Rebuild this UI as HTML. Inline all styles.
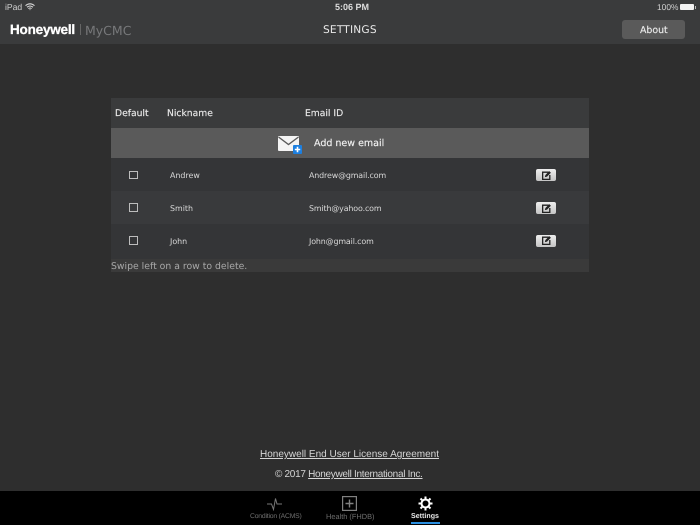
<!DOCTYPE html>
<html><head><meta charset="utf-8"><style>
html,body{margin:0;padding:0}
body{width:700px;height:525px;position:relative;overflow:hidden;background:#2e2e2e;font-family:"DejaVu Sans","Liberation Sans",sans-serif;text-rendering:geometricPrecision}
.a{position:absolute;white-space:nowrap}
.b{position:absolute}
.ls{font-family:"Liberation Sans",sans-serif}
.btn{position:absolute;left:536px;width:20px;height:12px;border-radius:2px;background:linear-gradient(#eee,#c4c4c4)}
.btn svg{position:absolute;left:5px;top:.5px}
.cb{position:absolute;left:129.2px;width:6.6px;height:6.6px;border:1.2px solid #bdbdbd}
.n{font-size:7.9px;color:#d8d8d8}
.e{letter-spacing:-.12px}
.h{font-size:9.2px;color:#e8e8e8;-webkit-text-stroke:.15px #e8e8e8}
</style></head><body>
<div class="b" style="left:0;top:0;width:700px;height:44px;background:#3a3b3c"></div>
<div class="a ls" style="left:5px;top:2px;font-size:8.6px;line-height:11px;color:#cfcfcf">iPad</div>
<svg class="b" style="left:25px;top:3px" width="10" height="8" viewBox="0 0 10 8"><path d="M0.5 2.6Q5 -1 9.5 2.6M2 4.2Q5 1.8 8 4.2M3.4 5.6Q5 4.5 6.6 5.6" fill="none" stroke="#ddd" stroke-width="1"/><path d="M4.2 6.4L5 7.4L5.8 6.4Z" fill="#ddd"/></svg>
<div class="a ls" style="left:335px;top:2px;font-size:9px;line-height:11px;color:#ddd;font-weight:bold">5:06 PM</div>
<div class="a ls" style="left:657px;top:2px;font-size:8.4px;line-height:11px;color:#cfcfcf">100%</div>
<div class="b" style="left:680px;top:4px;width:14px;height:6px;background:#f2f2f2;border-radius:1px"></div>
<div class="b" style="left:695px;top:6px;width:1px;height:3px;background:#bbb"></div>
<div class="a ls" style="left:10px;top:22px;font-size:13.5px;line-height:16px;font-weight:bold;color:#fff;letter-spacing:-0.2px;-webkit-text-stroke:0.3px #fff">Honeywell</div>
<div class="b" style="left:80px;top:24px;width:1px;height:11px;background:#666"></div>
<div class="a" style="left:85px;top:23px;font-size:12.5px;line-height:16px;color:#77787a">MyCMC</div>
<div class="a" style="left:323px;top:23px;font-size:10.6px;line-height:14px;color:#e8e8e8;letter-spacing:.2px">SETTINGS</div>
<div class="b" style="left:622px;top:20px;width:63px;height:19px;background:#5a5a5a;border-radius:3px"></div>
<div class="a" style="left:640px;top:24.5px;font-size:9.4px;line-height:12px;color:#e8e8e8;-webkit-text-stroke:.15px #e8e8e8">About</div>

<div class="b" style="left:111px;top:98px;width:478px;height:30px;background:#3a3b3c"></div>
<div class="b" style="left:111px;top:128px;width:478px;height:30px;background:#5a5a5a"></div>
<div class="b" style="left:111px;top:158px;width:478px;height:33px;background:#343537"></div>
<div class="b" style="left:111px;top:191px;width:478px;height:33px;background:#393a3c"></div>
<div class="b" style="left:111px;top:224px;width:478px;height:35px;background:#343537"></div>
<div class="b" style="left:111px;top:259px;width:478px;height:13px;background:#3a3a3a"></div>

<div class="a h" style="left:115px;top:108px;line-height:12px">Default</div>
<div class="a h" style="left:167px;top:108px;line-height:12px">Nickname</div>
<div class="a h" style="left:305px;top:108px;line-height:12px">Email ID</div>

<svg class="b" style="left:278px;top:135px" width="25" height="19" viewBox="0 0 25 19"><rect x="0" y="1" width="21" height="15" rx="1" fill="#f4f4f4"/><path d="M0.5 2L10.5 9.5L20.5 2" fill="none" stroke="#5a5a5a" stroke-width="1.4"/><rect x="15" y="10" width="9" height="9" rx="1" fill="#1c7fe0"/><path d="M19.5 11.8V17.2M16.8 14.5H22.2" stroke="#fff" stroke-width="1.6"/></svg>
<div class="a" style="left:314px;top:138px;font-size:9.5px;line-height:12px;color:#f0f0f0;-webkit-text-stroke:.15px #f0f0f0">Add new email</div>

<div class="cb" style="top:170.6px"></div>
<div class="a n" style="left:170px;top:170px;line-height:11px">Andrew</div>
<div class="a n e" style="left:309px;top:170px;line-height:11px">Andrew@gmail.com</div>
<div class="btn" style="top:169px"><svg width="11" height="11" viewBox="0 0 10 10"><path d="M7 2H1.5V8.5H8V4.5" fill="none" stroke="#222" stroke-width="1.2"/><path d="M3.5 6.5L4 4.5L7.5 1L9 2.5L5.5 6Z" fill="#222"/></svg></div>

<div class="cb" style="top:203.4px"></div>
<div class="a n" style="left:170px;top:203px;line-height:11px">Smith</div>
<div class="a n e" style="left:309px;top:203px;line-height:11px">Smith@yahoo.com</div>
<div class="btn" style="top:202px"><svg width="11" height="11" viewBox="0 0 10 10"><path d="M7 2H1.5V8.5H8V4.5" fill="none" stroke="#222" stroke-width="1.2"/><path d="M3.5 6.5L4 4.5L7.5 1L9 2.5L5.5 6Z" fill="#222"/></svg></div>

<div class="cb" style="top:236.4px"></div>
<div class="a n" style="left:170px;top:236px;line-height:11px">John</div>
<div class="a n e" style="left:309px;top:236px;line-height:11px">John@gmail.com</div>
<div class="btn" style="top:234.5px"><svg width="11" height="11" viewBox="0 0 10 10"><path d="M7 2H1.5V8.5H8V4.5" fill="none" stroke="#222" stroke-width="1.2"/><path d="M3.5 6.5L4 4.5L7.5 1L9 2.5L5.5 6Z" fill="#222"/></svg></div>

<div class="a" style="left:111px;top:260.5px;font-size:9.3px;line-height:12px;color:#a8a8a8">Swipe left on a row to delete.</div>

<div class="a ls" style="left:260px;top:448px;font-size:10px;line-height:13px;color:#d6d6d6;text-decoration:underline">Honeywell End User License Agreement</div>
<div class="a ls" style="left:275px;top:468px;font-size:10px;line-height:13px;color:#d6d6d6;letter-spacing:-.3px">© 2017 <span style="text-decoration:underline">Honeywell International Inc.</span></div>

<div class="b" style="left:0;top:491px;width:700px;height:34px;background:#000"></div>
<svg class="b" style="left:267px;top:497px" width="15" height="14" viewBox="0 0 15 14"><path d="M0 7H4.5L6.5 12.5L8.5 1.5L10 7H15" fill="none" stroke="#777" stroke-width="1"/></svg>
<div class="a ls" style="left:250px;top:512px;font-size:6.8px;line-height:9px;color:#6f6f6f;letter-spacing:-.2px">Condition (ACMS)</div>
<svg class="b" style="left:342px;top:496px" width="15" height="15" viewBox="0 0 15 15"><rect x=".6" y=".6" width="13.8" height="13.8" fill="none" stroke="#808080" stroke-width="1.2"/><path d="M7.5 3.5V11.5M3.5 7.5H11.5" stroke="#808080" stroke-width="1.4"/></svg>
<div class="a ls" style="left:326px;top:512px;font-size:7.4px;line-height:9px;color:#6f6f6f">Health (FHDB)</div>
<svg class="b" style="left:418px;top:496px" width="15" height="15" viewBox="0 0 15 15"><circle cx="7.5" cy="7.5" r="4" fill="none" stroke="#fff" stroke-width="2"/><path d="M7.5 .5V3M7.5 12V14.5M.5 7.5H3M12 7.5H14.5M2.5 2.5L4.3 4.3M10.7 10.7L12.5 12.5M12.5 2.5L10.7 4.3M4.3 10.7L2.5 12.5" stroke="#fff" stroke-width="2"/></svg>
<div class="a ls" style="left:411px;top:512px;font-size:7.1px;line-height:9px;color:#e8e8e8;font-weight:bold">Settings</div>
<div class="b" style="left:411px;top:522px;width:29px;height:1.5px;background:#2a8fe0"></div>
</body></html>
